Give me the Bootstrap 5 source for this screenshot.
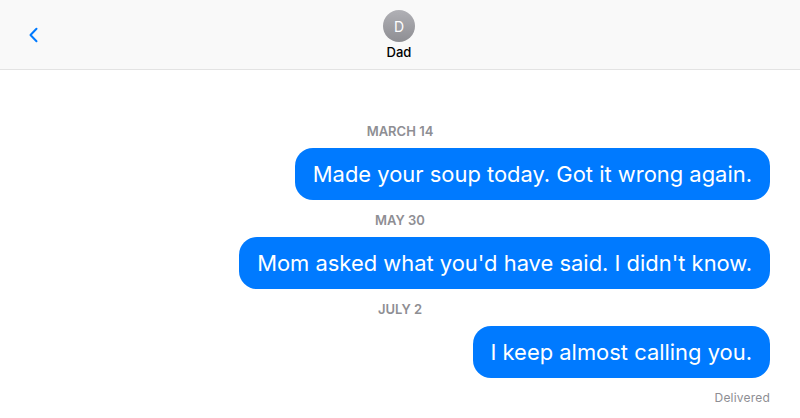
<!doctype html>
<html lang="en"><head><meta charset="utf-8">
<link href="https://cdn.jsdelivr.net/npm/bootstrap@5.3.0/dist/css/bootstrap.min.css" rel="stylesheet">
<style>
html,body{height:100%;overflow:hidden}
body{font-family:Inter,"Liberation Sans",sans-serif;background:#fff;color:#000}
.topbar{height:70px;background:#f9f9f9;border-bottom:1px solid #e3e3e3;padding:0 16px 0 27px}
.backlink{width:36px;height:36px;color:#007aff}
.headcenter{left:399px;top:10px;transform:translateX(-50%)}
.avatar-d{width:32px;height:32px;background:linear-gradient(#b0b0b5,#8e8e93);font-size:14px;font-weight:400}
.peername{font-size:13px;font-weight:500;line-height:16px;margin-top:2px}
.thread{padding:53px 30px 0 30px}
.stamp{font-size:13px;font-weight:600;color:#8e8e93;line-height:16px;text-align:center;margin-bottom:9px}
.bubble-me{background:#007aff;color:#fff;font-size:21.93px;font-weight:400;line-height:28px;padding:12px 18px;border-radius:18px;margin-bottom:12px}
.deliv{font-size:12px;color:#8e8e93;line-height:15px;letter-spacing:.2px}
</style></head><body>
<header class="topbar position-relative d-flex align-items-center">
<a class="backlink d-flex align-items-center" href="#" aria-label="Back"><svg width="12" height="16" viewBox="0 0 12 16"><path d="M9.5 1.800 3.500 8l6 6.200" fill="none" stroke="currentColor" stroke-width="2" stroke-linecap="round" stroke-linejoin="round"/></svg></a>
<div class="headcenter position-absolute d-flex flex-column align-items-center">
<div class="avatar-d rounded-circle text-white d-flex align-items-center justify-content-center">D</div>
<div class="peername">Dad</div></div>
</header>
<main class="thread">
<div class="stamp">MARCH 14</div>
<div class="d-flex justify-content-end"><div class="bubble-me">Made your soup today. Got it wrong again.</div></div>
<div class="stamp">MAY 30</div>
<div class="d-flex justify-content-end"><div class="bubble-me">Mom asked what you'd have said. I didn't know.</div></div>
<div class="stamp">JULY 2</div>
<div class="d-flex justify-content-end"><div class="bubble-me">I keep almost calling you.</div></div>
<div class="deliv text-end">Delivered</div>
</main>
<script src="https://cdn.jsdelivr.net/npm/bootstrap@5.3.0/dist/js/bootstrap.bundle.min.js"></script>
</body></html>
